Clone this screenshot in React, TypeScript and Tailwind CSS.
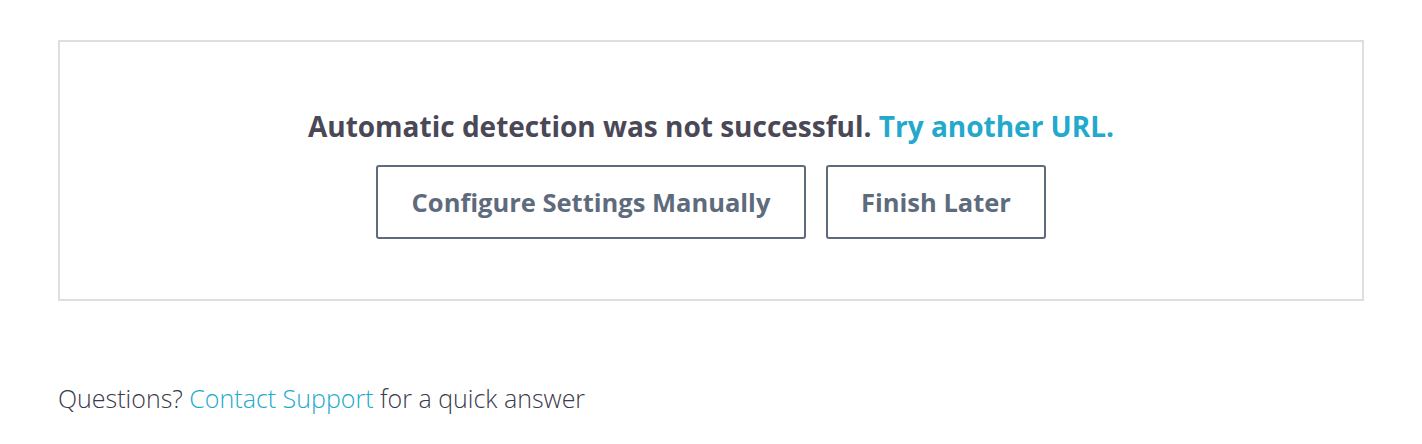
export default function App() {
  return (
    <div className="min-h-screen bg-white px-[58px] pt-[40px] font-['Open_Sans',sans-serif]">
      <section className="flex flex-col items-center border-2 border-[#dedede] pt-[66px] pb-[60px]">
        <h2 className="text-[28px] font-bold leading-[36px] text-[#4a4857]">
          Automatic detection was not successful.{" "}
          <a href="#" className="text-[#22a9cc]">Try another URL.</a>
        </h2>
        <div className="mt-[21px] flex gap-5">
          <button className="flex h-[74px] w-[430px] items-center justify-center rounded-[3px] border-2 border-[#5e6b7c] text-[25.5px] font-bold text-[#5e6b7c]">
            Configure Settings Manually
          </button>
          <button className="flex h-[74px] w-[220px] items-center justify-center rounded-[3px] border-2 border-[#5e6b7c] text-[25.5px] font-bold text-[#5e6b7c]">
            Finish Later
          </button>
        </div>
      </section>
      <p className="mt-[81px] text-[25px] font-light leading-[32px] text-[#3b3a4a]">
        Questions? <a href="#" className="text-[#22a9cc]">Contact Support</a> for a quick answer
      </p>
    </div>
  );
}
